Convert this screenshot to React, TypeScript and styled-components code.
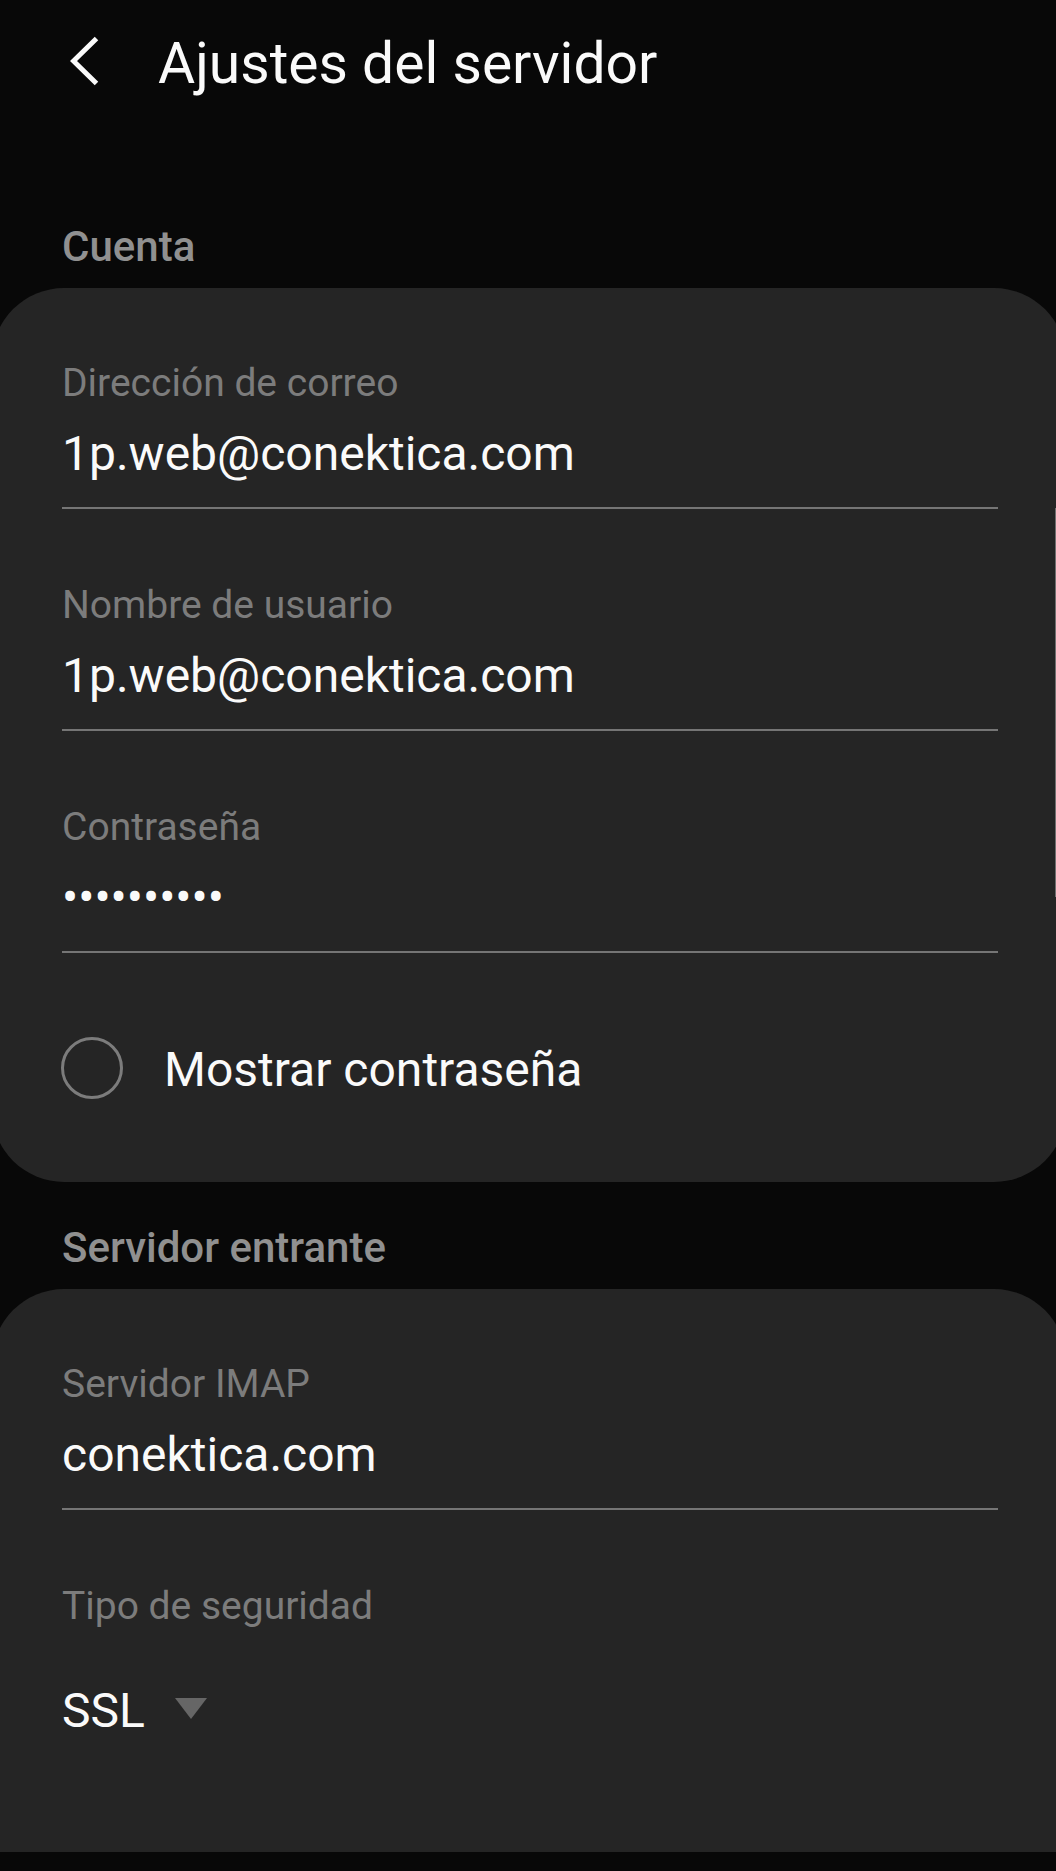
import React, { useState } from "react";
import styled, { createGlobalStyle } from "styled-components";

const GlobalStyle = createGlobalStyle`
  *, *::before, *::after { box-sizing: border-box; }
  html { background: #080808; }
  body {
    margin: 0;
    background: #080808;
    color: #fafafa;
    font-family: Roboto, "Noto Sans", sans-serif;
    overflow-x: hidden;
  }
`;

const Page = styled.main`
  position: relative;
  overflow: hidden;
  min-height: 100vh;
`;

const TopBar = styled.header`
  display: flex;
  align-items: center;
  gap: 40px;
  padding: 32px 58px 85px;
`;

const BackButton = styled.button`
  display: flex;
  align-items: center;
  justify-content: center;
  width: 60px;
  height: 64px;
  padding: 0;
  border: 0;
  background: none;
  color: #fafafa;
  cursor: pointer;
`;

const Title = styled.h1`
  margin: 0;
  font-size: 57px;
  line-height: 64px;
  font-weight: 400;
`;

const SectionTitle = styled.h2`
  margin: 0;
  padding: 42px 62px 17px;
  font-size: 42px;
  line-height: 48px;
  font-weight: 500;
  color: #909090;
`;

/* Cards bleed past both screen edges, so only part of each corner shows. */
const Card = styled.section<{ $open?: boolean }>`
  display: flex;
  flex-direction: column;
  gap: 72px;
  margin: 0 -10px 0 -8px;
  padding: 71px 68px ${(p) => (p.$open ? 113 : 79)}px 70px;
  border-radius: ${(p) => (p.$open ? "72px 72px 0 0" : "72px")};
  background: #252525;
`;

const FieldBox = styled.div`
  display: flex;
  flex-direction: column;
  gap: 18px;
`;

const SelectBox = styled(FieldBox)`
  gap: 53px;
  align-items: flex-start;
`;

const Label = styled.label`
  font-size: 39px;
  line-height: 48px;
  color: #7c7c7c;
`;

const Input = styled.input`
  width: 100%;
  height: 84px;
  padding: 0 0 26px;
  border: 0;
  border-bottom: 2px solid #757575;
  border-radius: 0;
  outline: 0;
  background: none;
  color: inherit;
  font-family: inherit;
  font-size: 48px;
  line-height: 56px;
`;

const CheckRow = styled.label`
  display: flex;
  align-items: flex-start;
  gap: 41px;
  padding-top: 12px;
  font-size: 48px;
  line-height: 66px;
  cursor: pointer;
`;

const CheckCircle = styled.input`
  appearance: none;
  flex: none;
  width: 62px;
  height: 62px;
  margin: 0 0 0 -1px;
  border: 3px solid #7c7c7c;
  border-radius: 50%;
  &:checked {
    background: #7c7c7c;
  }
`;

const SelectWrap = styled.div`
  display: grid;
  & > * {
    grid-area: 1 / 1;
  }
`;

const Select = styled.select`
  appearance: none;
  field-sizing: content;
  height: 56px;
  padding: 0 62px 0 0;
  border: 0;
  outline: 0;
  background: none;
  color: inherit;
  font-family: inherit;
  font-size: 48px;
  line-height: 56px;
`;

const Caret = styled.svg`
  justify-self: end;
  align-self: center;
  pointer-events: none;
`;

const ScrollThumb = styled.div`
  position: absolute;
  top: 508px;
  right: 0;
  width: 1px;
  height: 389px;
  background: #707070;
`;

type FieldProps = { id: string; label: string; value: string; type?: string };

function Field({ id, label, value, type = "text" }: FieldProps) {
  const [text, setText] = useState(value);
  return (
    <FieldBox>
      <Label htmlFor={id}>{label}</Label>
      <Input
        id={id}
        type={type}
        value={text}
        spellCheck={false}
        onChange={(e) => setText(e.target.value)}
      />
    </FieldBox>
  );
}

export default function App() {
  const [visible, setVisible] = useState(false);
  return (
    <Page>
      <GlobalStyle />
      <TopBar>
        <BackButton type="button" aria-label="Atrás">
          <svg width="36" height="56" viewBox="0 0 36 56" fill="none">
            <path d="M26.5 2.5 L3.5 25 L26.5 47.500" stroke="currentColor" strokeWidth="5" />
          </svg>
        </BackButton>
        <Title>Ajustes del servidor</Title>
      </TopBar>

      <SectionTitle>Cuenta</SectionTitle>
      <Card>
        <Field id="correo" label="Dirección de correo" value="1p.web@conektica.com" />
        <Field id="usuario" label="Nombre de usuario" value="1p.web@conektica.com" />
        <Field
          id="clave"
          label="Contraseña"
          value="contrasena"
          type={visible ? "text" : "password"}
        />
        <CheckRow>
          <CheckCircle
            type="checkbox"
            checked={visible}
            onChange={(e) => setVisible(e.target.checked)}
          />
          Mostrar contraseña
        </CheckRow>
      </Card>

      <SectionTitle>Servidor entrante</SectionTitle>
      <Card $open>
        <Field id="imap" label="Servidor IMAP" value="conektica.com" />
        <SelectBox>
          <Label htmlFor="seguridad">Tipo de seguridad</Label>
          <SelectWrap>
            <Select id="seguridad" defaultValue="SSL">
              <option>SSL</option>
            </Select>
            <Caret width="32" height="28" viewBox="0 0 32 28">
              <path d="M0 1 H32 L16 22 Z" fill="#666666" />
            </Caret>
          </SelectWrap>
        </SelectBox>
      </Card>
      <ScrollThumb />
    </Page>
  );
}
